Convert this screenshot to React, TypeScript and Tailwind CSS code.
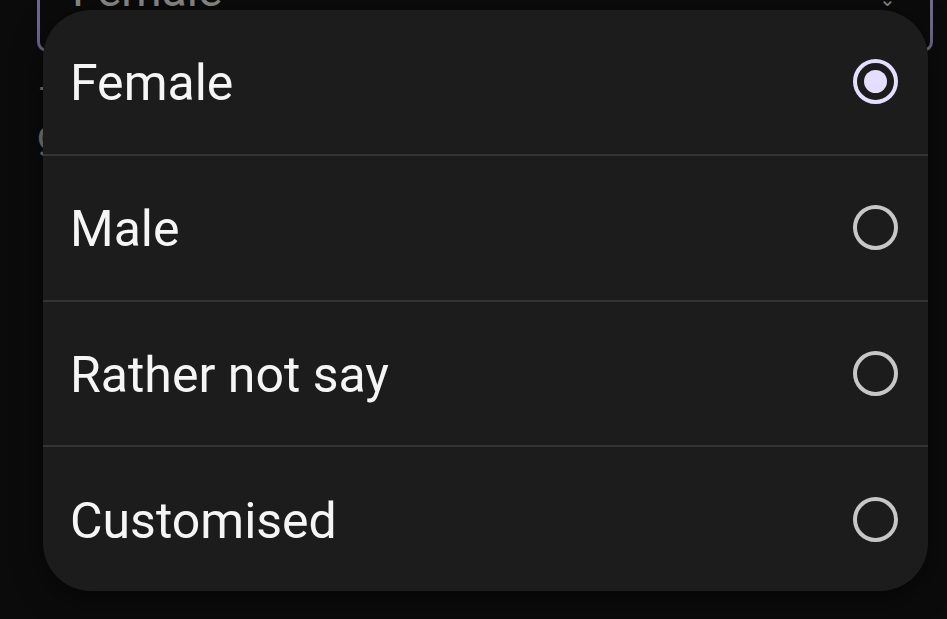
import React from 'react';

const options = ['Female', 'Male', 'Rather not say', 'Customised'];

function Radio({ checked }: { checked: boolean }) {
  if (checked) {
    return (
      <span className="w-[45px] h-[45px] rounded-full border-[4px] border-[#e5deff] flex items-center justify-center shrink-0">
        <span className="w-[23px] h-[23px] rounded-full bg-[#e5deff]"></span>
      </span>
    );
  }
  return <span className="w-[45px] h-[45px] rounded-full border-[4px] border-[#c7c7c7] shrink-0"></span>;
}

export default function App() {
  return (
    <div className="relative w-[947px] h-[619px] overflow-hidden bg-[#0b0b0b] font-['Roboto',sans-serif]">
      {/* text field behind the menu */}
      <div className="ml-[37px] mr-[14px] mt-[-60px] h-[112px] rounded-[10px] border-[3px] border-[#6f6a8c] flex items-end justify-between pl-[32px] pr-[34px] pb-[36px]">
        <span className="text-[46px] leading-none text-[#8a8a8a]">Female</span>
        <span className="text-[#8a8a8a] text-[20px] leading-none mb-[4px]">⌄</span>
      </div>
      <div className="ml-[37px] mt-[18px] text-[#7a7a7a] text-[40px] leading-none">–</div>
      <div className="ml-[37px] mt-[6px] text-[#7a7a7a] text-[40px] leading-none">g</div>

      {/* dropdown menu */}
      <div className="absolute left-[43px] top-[10px] w-[885px] h-[581px] rounded-[48px] bg-[#1c1c1c] overflow-hidden shadow-[0_8px_30px_rgba(0,0,0,0.5)] flex flex-col">
        {options.map((o, i) => (
          <div
            key={o}
            className={
              'flex-1 flex items-center justify-between pl-[27px] pr-[30px] ' +
              (i > 0 ? 'border-t-2 border-[#333333]' : '')
            }
          >
            <span className="text-[50px] leading-none text-[#f5f5f5] pt-[3px]">{o}</span>
            <Radio checked={i === 0} />
          </div>
        ))}
      </div>
    </div>
  );
}
